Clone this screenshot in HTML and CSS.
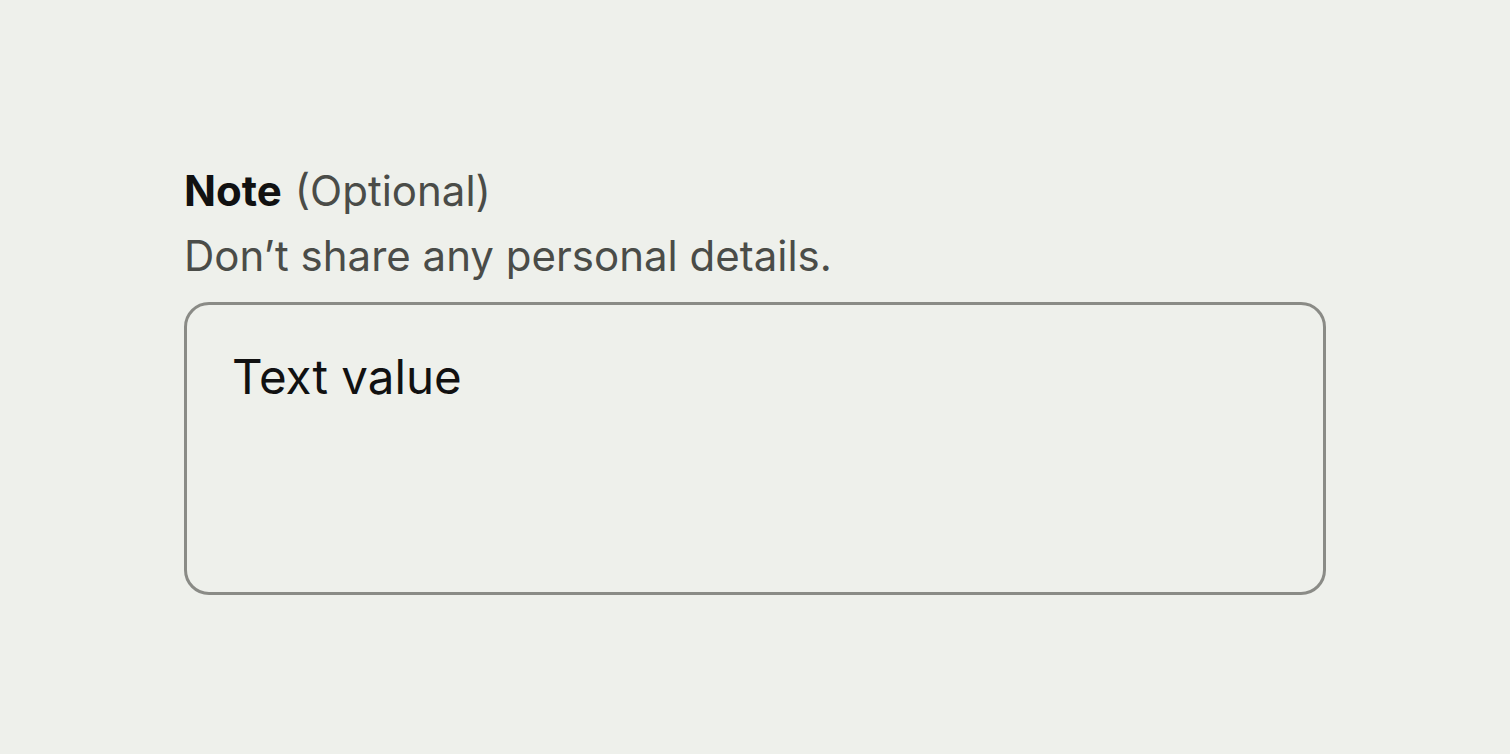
FILE: index.html
```html
<!DOCTYPE html>
<html>
<head>
<meta charset="utf-8">
<link rel="stylesheet" href="styles.css">
</head>
<body>
<div class="field">
  <div class="label"><span class="label-main">Note</span><span class="label-opt">(Optional)</span></div>
  <div class="hint">Don’t share any personal details.</div>
  <div class="box"><span class="value">Text value</span></div>
</div>
</body>
</html>
```
FILE: styles.css
```css
html, body {
  margin: 0;
  padding: 0;
  background: #eef0eb;
  font-family: Inter, "Noto Sans", sans-serif;
}
body {
  width: 1510px;
  height: 754px;
  overflow: hidden;
}
.field {
  padding: 164px 0 0 184px;
  width: 1142px;
}
.label {
  display: flex;
  align-items: baseline;
  gap: 13px;
  font-size: 42px;
  line-height: 54px;
}
.label-main {
  font-weight: 700;
  color: #111111;
}
.label-opt {
  color: #4a4c48;
}
.hint {
  font-size: 42px;
  line-height: 60px;
  color: #4a4c48;
  margin-top: 8px;
}
.box {
  margin-top: 16px;
  height: 293px;
  border: 3px solid #8a8b86;
  border-radius: 25px;
  padding: 42px 45px;
  box-sizing: border-box;
}
.value {
  font-size: 47.5px;
  line-height: 60px;
  color: #111111;
}
```
